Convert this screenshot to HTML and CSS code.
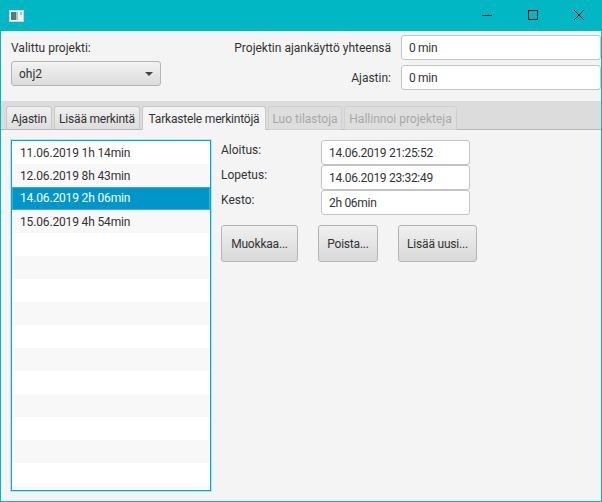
FILE: index.html
```html
<!DOCTYPE html>
<html>
<head>
	<title>Ajankäyttö</title>
	<link rel="stylesheet" href="styles.css">
</head>

<body>
	<div class="window">
		<div class="titlebar">
			<svg class="app-icon" width="16" height="14" viewBox="0 0 16 14">
				<rect x="0.5" y="1.5" width="14" height="11" fill="#eef1f1" stroke="#c4d6d8"/>
				<rect x="2" y="3" width="5" height="8" fill="#4f7f78"/>
				<rect x="7" y="3" width="2" height="8" fill="#a9c4c0"/>
				<rect x="11" y="3" width="2" height="3" fill="#a9c4c0"/>
			</svg>
			<div class="win-buttons">
				<svg width="12" height="12" viewBox="0 0 12 12"><path d="M1 5.5H11" stroke="#111" fill="none"/></svg>
				<svg width="12" height="12" viewBox="0 0 12 12"><rect x="1.5" y="0.5" width="9" height="9" stroke="#111" fill="none"/></svg>
				<svg width="12" height="12" viewBox="0 0 12 12"><path d="M1 0L11 10M11 0L1 10" stroke="#111" fill="none"/></svg>
			</div>
		</div>

		<div class="top">
			<div class="top-left">
				<label>Valittu projekti:</label>
				<div class="combo">
					<span>ohj2</span>
					<span class="arrow"></span>
				</div>
			</div>
			<div class="top-right">
				<div class="top-row">
					<label>Projektin ajankäyttö yhteensä</label>
					<input class="field" type="text" value="0 min">
				</div>
				<div class="top-row">
					<label>Ajastin:</label>
					<input class="field" type="text" value="0 min">
				</div>
			</div>
		</div>

		<div class="tabs">
			<div class="tab tab-timer">Ajastin</div>
			<div class="tab tab-add">Lisää merkintä</div>
			<div class="tab tab-view active">Tarkastele merkintöjä</div>
			<div class="tab tab-stats disabled">Luo tilastoja</div>
			<div class="tab tab-manage disabled">Hallinnoi projekteja</div>
		</div>

		<div class="content">
			<div class="list">
				<div class="row">11.06.2019 1h 14min</div>
				<div class="row">12.06.2019 8h 43min</div>
				<div class="row selected">14.06.2019 2h 06min</div>
				<div class="row">15.06.2019 4h 54min</div>
				<div class="row"></div>
				<div class="row"></div>
				<div class="row"></div>
				<div class="row"></div>
				<div class="row"></div>
				<div class="row"></div>
				<div class="row"></div>
				<div class="row"></div>
				<div class="row"></div>
				<div class="row"></div>
				<div class="row"></div>
				<div class="row"></div>
			</div>

			<div class="details">
				<div class="detail-grid">
					<label>Aloitus:</label>
					<input class="field" type="text" value="14.06.2019 21:25:52">
					<label>Lopetus:</label>
					<input class="field" type="text" value="14.06.2019 23:32:49">
					<label>Kesto:</label>
					<input class="field" type="text" value="2h 06min">
				</div>
				<div class="actions">
					<button class="btn-edit">Muokkaa...</button>
					<button class="btn-delete">Poista...</button>
					<button class="btn-new">Lisää uusi...</button>
				</div>
			</div>
		</div>
	</div>
</body>

</html>
```

FILE: styles.css
```css
* {
	box-sizing: border-box;
}

html,
body {
	margin: 0;
	height: 100%;
}

body {
	font-family: Roboto, "Noto Sans", sans-serif;
	font-size: 12px;
	color: #333;
}

.window {
	display: flex;
	flex-direction: column;
	height: 502px;
	border: 1px solid #00b7c3;
	border-top: none;
	background-color: #f4f4f4;
}

.titlebar {
	display: flex;
	align-items: center;
	justify-content: space-between;
	height: 31px;
	flex: none;
	margin: 0 -1px;
	background-color: #00b7c3;
	padding-left: 9px;
}

.win-buttons {
	display: flex;
}

.win-buttons svg {
	box-sizing: content-box;
	padding: 0 17px;
	width: 12px;
}

.top {
	display: flex;
	justify-content: space-between;
	height: 70px;
	flex: none;
	padding: 4px 0 0 10px;
}

.top-left label {
	display: block;
	margin-top: 6px;
}

.combo {
	display: flex;
	align-items: center;
	justify-content: space-between;
	width: 150px;
	height: 25px;
	margin-top: 6px;
	padding: 0 8px 0 7px;
	border: 1px solid #b5b5b5;
	border-radius: 3px;
	background: linear-gradient(#f2f2f2, #dcdcdc);
}

.arrow {
	width: 0;
	height: 0;
	margin-right: -1px;
	border-left: 4px solid transparent;
	border-right: 4px solid transparent;
	border-top: 4px solid #444;
}

.top-right {
	display: flex;
	flex-direction: column;
	gap: 5px;
}

.top-row {
	display: flex;
	align-items: center;
	justify-content: flex-end;
	gap: 10px;
}

.top-row .field {
	width: 200px;
}

.field {
	height: 25px;
	padding: 0 7px;
	border: 1px solid #c4c4c4;
	border-radius: 3px;
	background-color: #fff;
	font-family: inherit;
	font-size: 12px;
	letter-spacing: -0.3px;
	color: #333;
	outline: none;
}

.tabs {
	display: flex;
	align-items: flex-end;
	gap: 2px;
	height: 29px;
	flex: none;
	padding-left: 5px;
	background-color: #dcdcdc;
	border-bottom: 1px solid #b8b8b8;
}

.tab {
	height: 24px;
	margin-bottom: -1px;
	padding-top: 1px;
	line-height: 23px;
	text-align: center;
	letter-spacing: -0.2px;
	border: 1px solid #c8c8c8;
	border-bottom: 1px solid #b8b8b8;
	border-radius: 3px 3px 0 0;
	background: linear-gradient(#f0f0f0, #dedede);
}

.tab-timer {
	width: 46px;
}

.tab-add {
	width: 86px;
}

.tab-view {
	width: 124px;
}

.tab-stats {
	width: 74px;
}

.tab-manage {
	width: 113px;
}

.tab.active {
	background: #f4f4f4;
	border-bottom-color: #f4f4f4;
}

.tab.disabled {
	color: #a8a8a8;
	letter-spacing: 0;
	background: #dedede;
	border-color: #d0d0d0;
}

.content {
	display: flex;
	flex: 1;
	min-height: 0;
	padding: 10px 0 10px 10px;
}

.list {
	width: 200px;
	height: 351px;
	overflow: hidden;
	border: 1px solid #00a8e0;
	box-shadow: 0 0 0 1px rgba(0, 168, 224, 0.25);
	background-color: #fff;
}

.row {
	height: 23px;
	padding: 1px 0 0 8px;
	line-height: 22px;
	letter-spacing: -0.15px;
}

.row:nth-child(even) {
	background-color: #f8f8f8;
}

.row.selected {
	background-color: #0096c9;
	color: #fff;
	border: 1px solid #35b0da;
	padding: 0 0 0 7px;
	line-height: 21px;
}

.details {
	margin-left: 10px;
}

.detail-grid {
	display: grid;
	grid-template-columns: 100px 149px;
	grid-auto-rows: 25px;
}

.detail-grid label {
	padding-top: 3px;
}

.detail-grid .field {
	width: 149px;
}

.actions {
	display: flex;
	margin-top: 10px;
}

button {
	height: 37px;
	border: 1px solid #b5b5b5;
	border-radius: 3px;
	background: linear-gradient(#f0f0f0, #d8d8d8);
	font-family: inherit;
	font-size: 12px;
	letter-spacing: -0.2px;
	color: #333;
	padding: 0;
}

.btn-edit {
	width: 77px;
}

.btn-delete {
	width: 60px;
	margin-left: 20px;
}

.btn-new {
	width: 79px;
	margin-left: 20px;
}
```
